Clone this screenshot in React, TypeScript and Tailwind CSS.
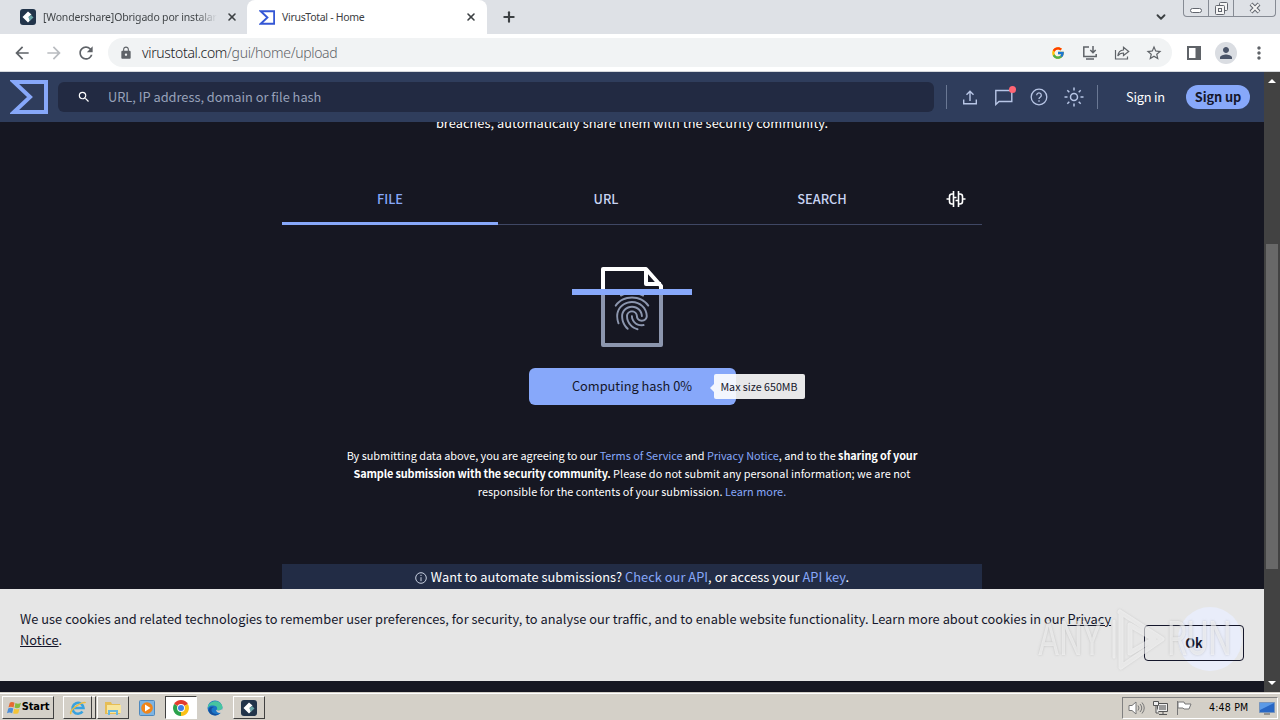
import type { ReactNode } from "react";
import { ChevronDown, X, Plus } from "lucide-react";
import {
  MdArrowBack, MdArrowForward, MdRefresh, MdLock, MdStarBorder, MdPerson,
  MdMoreVert, MdFingerprint, MdSearch,
} from "react-icons/md";
import { FcGoogle } from "react-icons/fc";

const TABS = [
  { label: "FILE", active: true },
  { label: "URL", active: false },
  { label: "SEARCH", active: false },
];

function Sigma({ className, width }: { className: string; width: number }) {
  return (
    <svg viewBox="0 0 38 34" className={className} fill="none" stroke="currentColor" strokeWidth={width}>
      <path d="M4 2h32v30H4l16-15z" />
    </svg>
  );
}

function WondershareIcon({ className }: { className: string }) {
  return (
    <svg viewBox="0 0 16 16" className={className}>
      <rect width="16" height="16" rx="3" fill="#22344a" />
      <path d="M2.5 8L8 2.500l3.500 3L8.500 8l2 3-2.500 2.500z" fill="#fff" />
      <path d="M8.500 8l2.500-2 2.500 2.500L9.500 12z" fill="#6aa5a8" />
    </svg>
  );
}

function ChromeLogo() {
  return (
    <svg viewBox="0 0 16 16" className="size-4">
      <path d="M8 8L1.1 4A8 8 0 0 1 14.9 4z" fill="#e33b2e" />
      <path d="M8 8l6.9-4A8 8 0 0 1 8 16z" fill="#fbc116" />
      <path d="M8 8v8A8 8 0 0 1 1.1 4z" fill="#2ba24c" />
      <circle cx="8" cy="8" r="3.9" fill="#fff" />
      <circle cx="8" cy="8" r="3" fill="#3f7ee8" />
    </svg>
  );
}

function BrowserTabs() {
  return (
    <div className="flex h-[34px] shrink-0 bg-[#dee1e6] font-['Noto_Sans'] text-[10.5px] text-[#3c4043]">
      <div className="flex w-[247px] items-center pr-2 pl-5">
        <WondershareIcon className="size-4 shrink-0" />
        <span className="ml-[7px] w-[174px] overflow-hidden bg-linear-to-r from-[#3c4043] from-88% to-transparent bg-clip-text pt-px whitespace-nowrap text-transparent tracking-[-0.18px]">
          [Wondershare]Obrigado por instalar
        </span>
        <X className="ml-[9px] size-3 shrink-0" strokeWidth={3.2} />
      </div>
      <div className="flex w-[240px] items-center rounded-t-lg bg-white pr-2.5 pl-3">
        <Sigma className="h-[15px] w-4 text-[#3457d5]" width={4.5} />
        <span className="ml-[7px] flex-1 pt-px tracking-[-0.3px]">VirusTotal - Home</span>
        <X className="size-3" strokeWidth={3.2} />
      </div>
      <Plus className="mt-[9px] ml-[14px] size-4" strokeWidth={3.2} />
      <div className="flex-1" />
      <ChevronDown className="mt-2.5 mr-[15px] size-[14px]" strokeWidth={3.2} />
      <div className="mr-1 flex h-[17px] w-[93px] rounded-b border border-t-0 border-[#868b94]">
        <div className="flex w-[25px] items-end justify-center border-r border-[#868b94] pb-[3px]">
          <div className="h-[5px] w-3 rounded-sm border border-[#62666e] bg-white" />
        </div>
        <div className="flex w-[25px] items-center justify-center border-r border-[#868b94]">
          <svg viewBox="0 0 13 13" className="size-[13px]" fill="#f5f5f5" stroke="#62666e">
            <rect x="4.5" y=".5" width="8" height="8" rx="1" />
            <rect x=".5" y="3.5" width="9" height="9" rx="1" />
            <rect x="3.5" y="6.5" width="3" height="3" />
          </svg>
        </div>
        <div className="flex flex-1 items-center justify-center">
          <svg viewBox="0 0 12 12" className="size-3">
            <path d="M2 2l8 8M10 2l-8 8" stroke="#62666e" strokeWidth="4" />
            <path d="M2.3 2.3l7.4 7.4M9.7 2.3l-7.4 7.4" stroke="#f5f5f5" strokeWidth="2" />
          </svg>
        </div>
      </div>
    </div>
  );
}

function AddressBar() {
  return (
    <div className="flex h-[38px] shrink-0 items-center border-b border-[#d5d8dc] bg-white text-[#5f6368]">
      <MdArrowBack className="ml-3 size-5" />
      <MdArrowForward className="ml-3 size-5 text-[#b9bcc0]" />
      <MdRefresh className="ml-3 size-5" />
      <div className="ml-3 flex h-[29px] w-[1064px] items-center rounded-full bg-[#f1f3f4] pr-[9px] pl-[11px]">
        <MdLock className="size-[14px]" />
        <span className="ml-[9px] flex-1 font-['Noto_Sans'] text-[14px] font-light tracking-[-0.33px] text-[#5f6368]">
          <span className="text-[#202124]">virustotal.com</span>/gui/home/upload
        </span>
        <FcGoogle className="size-[14px]" />
        <svg viewBox="0 0 16 16" className="ml-[17px] size-4" fill="none" stroke="currentColor" strokeWidth="1.5">
          <path d="M7 2H1.8v9.5h12.4V9M4 14h8M11 1v6.5M8.3 5L11 7.7 13.7 5" />
        </svg>
        <svg viewBox="0 0 16 16" className="ml-4 size-4" fill="none" stroke="currentColor" strokeWidth="1.2">
          <path d="M1.5 5v9h12v-2.5M9.5 5V2.2L14.7 6.500 9.5 10.500V8C6.500 8 5 9 3.800 11 4.200 7.500 6 5.300 9.500 5z" />
        </svg>
        <MdStarBorder className="ml-[15px] size-[18px]" />
      </div>
      <svg viewBox="0 0 14 14" className="ml-[15px] size-[14px]">
        <path d="M1 1h12v12H1z" fill="none" stroke="currentColor" strokeWidth="2" />
        <path d="M8.5 1H13v12H8.5z" fill="currentColor" />
      </svg>
      <div className="ml-[14px] flex size-[22px] items-center justify-center rounded-full bg-[#dadde2]">
        <MdPerson className="size-[18px] text-[#4a5468]" />
      </div>
      <MdMoreVert className="ml-3 size-5" />
    </div>
  );
}

function VtHeader() {
  return (
    <header className="flex h-[50px] shrink-0 items-center bg-[#2f3d5c] text-[12.8px] text-[#b8c6e6]">
      <Sigma className="ml-2.5 h-[34px] w-[38px] text-[#87a8fa]" width={4} />
      <div className="ml-2.5 flex h-[30px] w-[876px] items-center rounded-md bg-[#222a42]">
        <MdSearch className="ml-[19px] size-[14px] text-white" />
        <span className="ml-[17px] text-[#98a2ba]">URL, IP address, domain or file hash</span>
      </div>
      <div className="ml-3 h-6 w-px bg-[#6a7894]" />
      <svg viewBox="0 0 14 15" className="ml-4 h-[15px] w-[14px]" fill="none" stroke="currentColor" strokeWidth="1.4">
        <path d="M.7 9.500v4.300h12.600V9.500M7 11V1.500M3.500 4.800L7 1.300l3.500 3.500" />
      </svg>
      <div className="relative ml-[18px]">
        <svg viewBox="0 0 18 17" className="h-[17px] w-[18px]" fill="none" stroke="currentColor" strokeWidth="1.4">
          <path d="M.8 15.500V1.500h16v11H4z" />
        </svg>
        <span className="absolute -top-[3px] -right-[3px] size-[7px] rounded-full bg-[#ff6574]" />
      </div>
      <svg viewBox="0 0 18 18" className="ml-[17px] size-[18px]" fill="none" stroke="currentColor" strokeWidth="1.3">
        <circle cx="9" cy="9" r="7.8" />
        <path d="M6.700 7.200a2.300 2.300 0 1 1 3.500 2C9.400 9.700 9 10 9 11" />
        <path d="M9 12.200v1.500" />
      </svg>
      <svg viewBox="0 0 20 20" className="ml-4 size-5" fill="none" stroke="currentColor" strokeWidth="1.5">
        <circle cx="10" cy="10" r="3.5" />
        <path d="M10 .5v3M10 16.500v3M.5 10h3M16.500 10h3M3.300 3.300l2 2M14.700 14.700l2 2M16.700 3.300l-2 2M5.300 14.700l-2 2" />
      </svg>
      <div className="ml-[13px] h-6 w-px bg-[#6a7894]" />
      <span className="ml-7 w-[60px] tracking-[-0.2px] text-white">Sign in</span>
      <button className="flex h-6 w-16 items-center justify-center rounded-full bg-[#87a8fa] font-bold tracking-[-0.1px] whitespace-nowrap text-[#15172b]">
        Sign up
      </button>
    </header>
  );
}

function ScanGraphic() {
  return (
    <svg viewBox="0 0 120 84" className="mt-[39px] h-[84px] w-[120px] shrink-0" fill="none" strokeLinejoin="round">
      <path d="M31 29v52h58V29" stroke="#8c96ae" strokeWidth="4" />
      <MdFingerprint x="37" y="24" size={46} color="#8c96ae" />
      <path d="M31 28V5h43l15 17v6M74 5v15h15" stroke="#fff" strokeWidth="4" />
      <path d="M0 28h120" stroke="#87a8fa" strokeWidth="6" />
    </svg>
  );
}

function Blue({ children }: { children: ReactNode }) {
  return <span className="text-[#87a8fa]">{children}</span>;
}

function Home() {
  return (
    <main className="flex min-h-0 flex-1 flex-col items-center overflow-hidden text-white">
      <p className="-mt-[11px] h-6 shrink-0 text-[12.8px] leading-6 tracking-[0.05px]">
        breaches, automatically share them with the security community.
      </p>
      <div className="mt-[39px] flex h-[51px] w-[700px] shrink-0 border-b border-[#3f4764] text-[12.8px] font-medium">
        {TABS.map(tab => (
          <div
            key={tab.label}
            className={`-mb-px flex w-[216px] items-center justify-center ${
              tab.active ? "border-b-3 border-[#87a8fa] pt-px text-[#87a8fa]" : "pb-0.5 text-[#c8d4f2]"
            }`}
          >
            {tab.label}
          </div>
        ))}
        <div className="flex flex-1 items-center justify-center">
          <svg viewBox="0 0 20 16" className="h-4 w-5" fill="none" stroke="#fff" strokeWidth="1.6">
            <path d="M7.500 0v16M12.500 0v16M7.500 3H6Q3.500 3 3.500 5.500v5Q3.500 13 6 13h1.500M12.500 3H14q2.500 0 2.500 2.500v5Q16.500 13 14 13h-1.500M.5 8h3M16.500 8h3" />
            <path d="M8 6.500h2.500M9.500 9.500H12" strokeWidth="1.3" />
          </svg>
        </div>
      </div>
      <ScanGraphic />
      <div className="relative mt-5 flex h-[37px] w-[207px] shrink-0 items-center justify-center rounded-md bg-[#87a8fa] pb-px text-[12.8px] text-[#15172b]">
        Computing hash 0%
        <div className="absolute top-[6px] left-[185px] flex h-[25px] w-[91px] items-center justify-center rounded-xs bg-white/90 pt-0.5 text-[10.7px] whitespace-nowrap text-[#15172b]">
          <span className="absolute top-[10px] -left-[4px] border-y-4 border-r-4 border-y-transparent border-r-white/90" />
          Max size 650MB
        </div>
      </div>
      <div className="mt-[41px] shrink-0 text-center text-[10.9px] leading-[18px] whitespace-nowrap">
        <p className="tracking-[-0.02px]">
          By submitting data above, you are agreeing to our <Blue>Terms of Service</Blue> and <Blue>Privacy Notice</Blue>, and to the <b className="tracking-[-0.1px]">sharing of your</b>
        </p>
        <p className="tracking-[0.03px]">
          <b className="tracking-[-0.14px]">Sample submission with the security community.</b> Please do not submit any personal information; we are not
        </p>
        <p className="tracking-[0.03px]">
          responsible for the contents of your submission. <Blue>Learn more.</Blue>
        </p>
      </div>
      <div className="mt-16 flex h-[46px] w-[700px] shrink-0 items-start justify-center bg-[#222c45] pt-[3px] text-[12.8px] leading-5 tracking-[0.05px]">
        <svg viewBox="0 0 12 12" className="mt-[5px] mr-1 size-3" fill="none" stroke="#c8d0e0">
          <circle cx="6" cy="6" r="5.3" />
          <path d="M6 5.200v4M6 2.800v1.200" />
        </svg>
        <p>Want to automate submissions? <Blue>Check our API</Blue>, or access your <Blue>API key</Blue>.</p>
      </div>
    </main>
  );
}

function CookieBanner() {
  return (
    <div className="relative flex h-[92px] shrink-0 bg-[#e6e6e6] pl-5 text-[12.8px] text-[#15172b]">
      <p className="w-[1104px] pt-[19px] leading-[21px] tracking-[0.032px]">
        We use cookies and related technologies to remember user preferences, for security, to analyse our traffic, and to enable website functionality. Learn more about cookies in our <span className="underline">Privacy Notice</span>.
      </p>
      <span className="absolute top-[18px] left-[1178px] size-16 rounded-full bg-[#e9edfa]" />
      <button className="relative mt-9 ml-5 h-9 w-[100px] rounded border border-[#15172b] font-bold">Ok</button>
      {/* Recorder watermark */}
      <div className="absolute top-[18px] left-[1038px] flex h-16 items-center font-['Roboto'] text-[48px] text-white/55 [text-shadow:0_0_3px_#8886]">
        <span className="w-[74px] origin-left scale-x-68">ANY</span>
        <svg viewBox="0 0 55 64" className="h-16 w-[55px] drop-shadow-[0_0_1px_#8888]" fill="none" strokeLinecap="round" strokeLinejoin="round">
          <path d="M8 5L50 32 9 60V46M9 50V7M18 18v28l24-14z" stroke="#ffffff" strokeOpacity="0.55" strokeWidth="5" />
          <path d="M2 14v36" stroke="#ffffff" strokeOpacity="0.55" strokeWidth="3" />
        </svg>
        <span className="w-[72px] origin-left scale-x-68">RUN</span>
      </div>
    </div>
  );
}

function Scrollbar() {
  return (
    <div className="flex w-4 shrink-0 flex-col items-center bg-[#424242]">
      <div className="mt-[7px] border-x-4 border-b-4 border-x-transparent border-b-white" />
      <div className="mt-[161px] h-[325px] w-3 bg-[#686868]" />
      <div className="mt-auto mb-[7px] border-x-4 border-t-4 border-x-transparent border-t-white" />
    </div>
  );
}

function TaskButton({ children, className = "" }: { children?: ReactNode; className?: string }) {
  return (
    <div className={`flex h-[23px] items-center justify-center border border-t-white border-r-[#404040] border-b-[#404040] border-l-white ${className}`}>
      {children}
    </div>
  );
}

function Taskbar() {
  return (
    <div className="flex h-7 shrink-0 items-center border-t border-[#d4d0c8] bg-[#d4d0c8] pt-0.5 font-['DejaVu_Sans_Condensed','DejaVu_Sans'] text-[11px] text-black shadow-[inset_0_1px_0_#fff]">
      <TaskButton className="ml-0.5 w-[52px] font-bold tracking-[-0.1px]">
        <svg viewBox="0 0 16 16" className="size-[15px] shrink-0">
          <path d="M3 3q2-2 5 0L7 8Q4 6.500 1.500 8z" fill="#e66a32" />
          <path d="M9 3.300q3 1.500 6-.3L13.500 8q-3 1.500-5.500 0z" fill="#86b93e" />
          <path d="M1.300 9Q4 7.500 6.700 9l-1.200 5Q3 12.500 0 14z" fill="#4b8ed8" />
          <path d="M7.700 9.200q3 1.300 5.600 0L12 14q-3 1.500-5.500 0z" fill="#f4c437" />
        </svg>
        Start
      </TaskButton>
      <TaskButton className="ml-[9px] w-[29px]">
        <svg viewBox="0 0 18 18" className="size-[18px]" fill="none">
          <path d="M13.500 12.500A5.500 5.500 0 1 1 14.500 9H4" stroke="#39a2df" strokeWidth="2.6" />
          <path d="M2 15C-1 11 15 1 16.500 4" stroke="#edbd3f" strokeWidth="1.5" />
        </svg>
      </TaskButton>
      <TaskButton className="w-[4px] border-l-0" />
      <TaskButton className="ml-px w-8">
        <svg viewBox="0 0 18 16" className="h-4 w-[18px]">
          <path d="M1 2h6l1 2h8v10H1z" fill="#e6bd55" />
          <path d="M3 5h14v8H3z" fill="#f8e59b" />
          <path d="M4 15v-5h10v5h-2v-3H6v3z" fill="#68b6dc" />
        </svg>
      </TaskButton>
      <svg viewBox="0 0 16 16" className="ml-[10px] size-4">
        <rect x=".5" y=".5" width="15" height="15" rx="1" fill="#7db4e3" stroke="#4e88bd" />
        <circle cx="8" cy="8" r="5.8" fill="#f08519" />
        <path d="M6 4.500v7L11.500 8z" fill="#fff" />
      </svg>
      <div className="ml-[10px] flex h-[23px] w-8 items-center justify-center border border-t-[#404040] border-r-white border-b-white border-l-[#404040] bg-white">
        <ChromeLogo />
      </div>
      <svg viewBox="0 0 16 16" className="ml-[10px] size-4">
        <circle cx="8" cy="8" r="7.5" fill="#1b75c8" />
        <path d="M1 6C3 0 14-1 15.500 7c0 3-3 4-6 3 2-3-1-5-4-4.500C3.500 5.500 2 6 1 8z" fill="#47c5a0" />
        <path d="M5 8c-2 4 2 7 7 6-3 3-10 1-10.500-4C2 7 5 6 7 7z" fill="#154f9c" />
        <path d="M9 10c3 1 6 0 6.500-2v4c-2 2-6 1-6.500-2z" fill="#d4d0c8" />
      </svg>
      <TaskButton className="ml-[10px] w-8">
        <WondershareIcon className="size-4" />
      </TaskButton>
      <div className="mr-0.5 ml-auto flex h-[22px] w-[156px] items-center border border-t-[#808080] border-r-white border-b-white border-l-[#808080] pl-[5px]">
        <svg viewBox="0 0 17 14" className="h-[14px] w-[17px]" fill="#fff" stroke="#777">
          <path d="M1 4.500h3l4-3.500v12L4 9.500H1z" />
          <path d="M10 4.500q2 2.500 0 5M12 3q3.500 4 0 8M14 1.500q4.500 5.500 0 11" fill="none" />
        </svg>
        <svg viewBox="0 0 17 16" className="ml-[7px] h-4 w-[17px]" fill="#eee" stroke="#555">
          <path d="M5.500 3.500h10v8h-10zM7 14.500h8M11 12v2" />
          <path d="M7 5h7v5H7z" fill="#999" stroke="none" />
          <path d="M1.500 1.500h5v4h-5zM4 6v7h3" />
        </svg>
        <svg viewBox="0 0 16 16" className="ml-[7px] size-4" fill="#fff" stroke="#777">
          <path d="M1.500 1v14M2 2h6l1 2h6l-2 5H8L7 8H2z" />
        </svg>
        <span className="ml-[17px] w-[50px] text-[10.5px] tracking-[0.2px] whitespace-nowrap">4:48 PM</span>
        <svg viewBox="0 0 16 14" className="h-[14px] w-4">
          <path d="M.5 1.500h15v10H.5z" fill="#2867c4" stroke="#7795bd" />
          <path d="M1 2h14L1 9z" fill="#5b9ae6" />
          <path d="M5 13h6" stroke="#555" />
        </svg>
      </div>
    </div>
  );
}

export default function App() {
  return (
    <div className="flex h-screen w-full flex-col overflow-hidden">
      <BrowserTabs />
      <AddressBar />
      <div className="flex min-h-0 flex-1 font-['Noto_Sans_CJK_SC',sans-serif]">
        <div className="flex min-w-0 flex-1 flex-col overflow-hidden bg-[#161722]">
          <VtHeader />
          <Home />
          <CookieBanner />
          <div className="h-[11px] shrink-0" />
        </div>
        <Scrollbar />
      </div>
      <Taskbar />
    </div>
  );
}
